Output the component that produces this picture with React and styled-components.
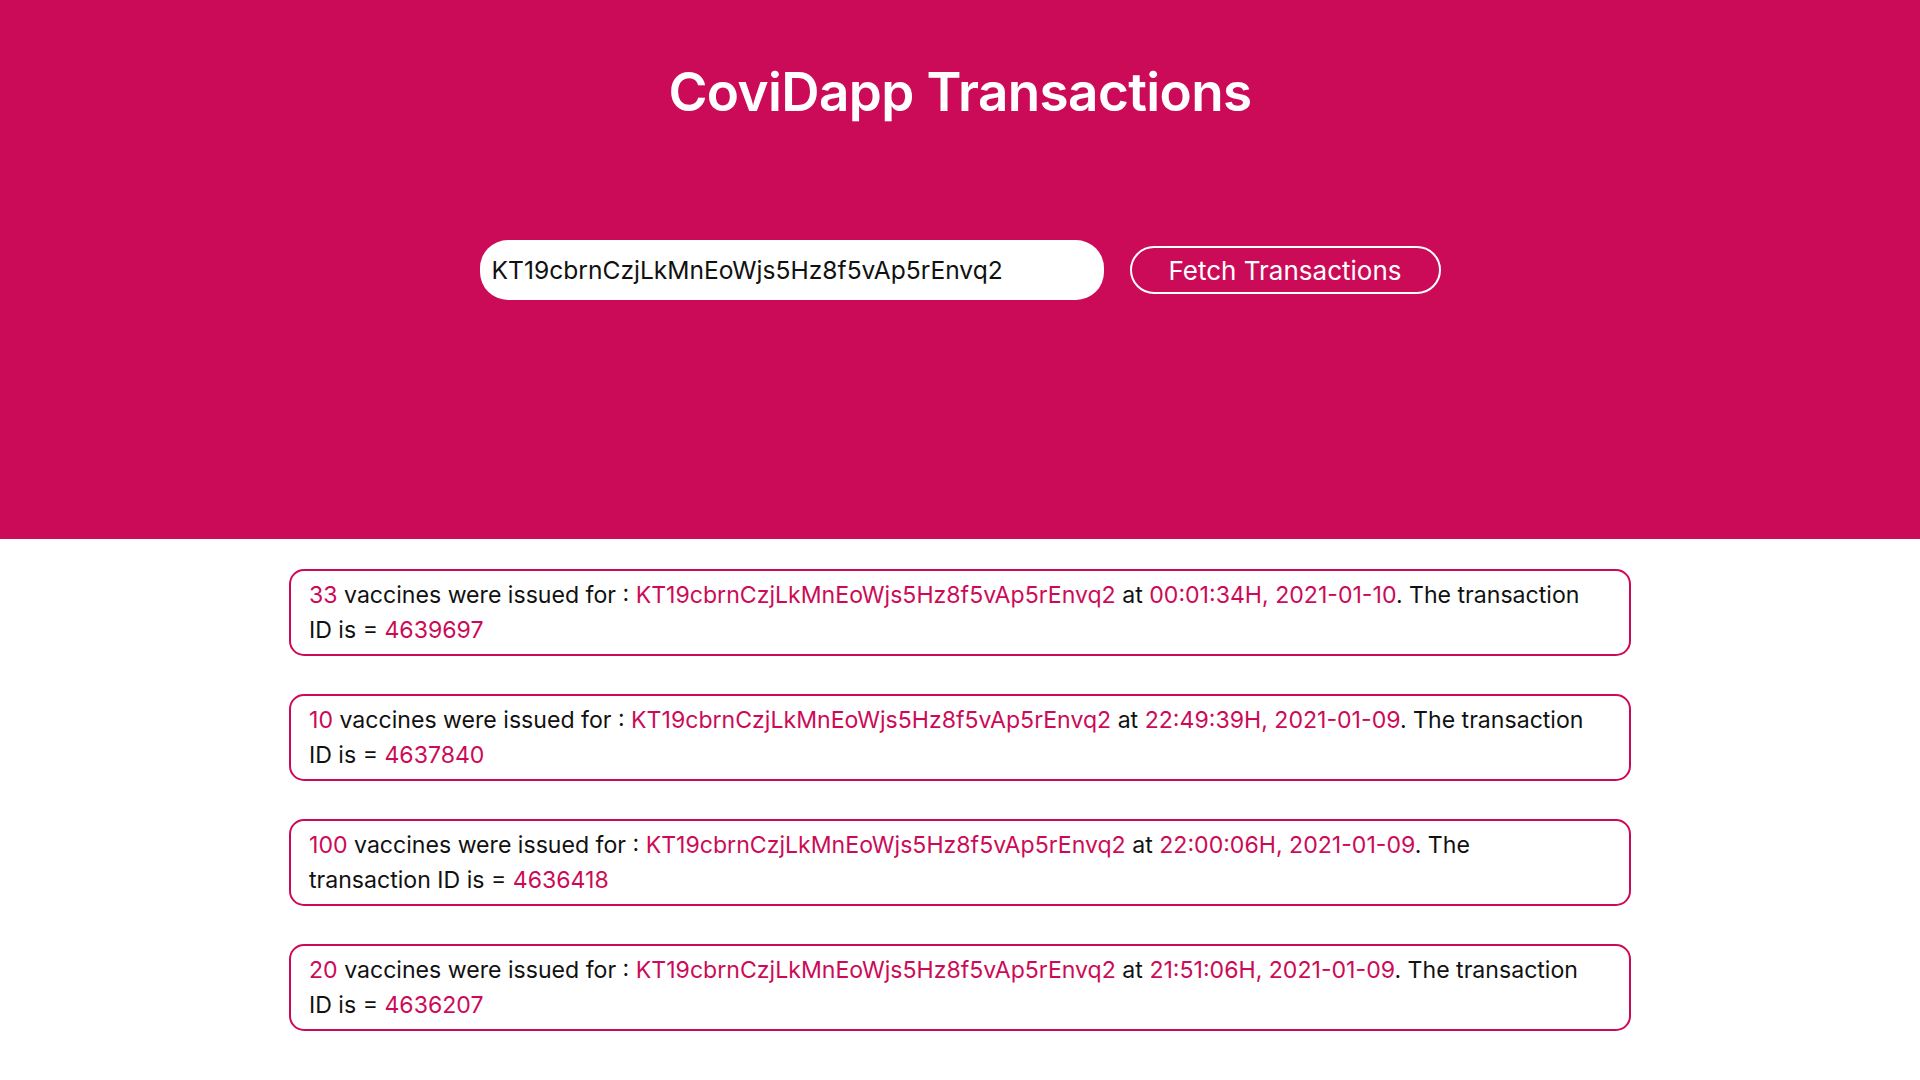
import React from "react";
import styled, { createGlobalStyle } from "styled-components";

const PINK = "#cc0b58";

const GlobalStyle = createGlobalStyle`
  html, body { margin: 0; padding: 0; background: #fff; }
  body { font-family: "Inter", "Liberation Sans", sans-serif; }
`;

const Header = styled.header`
  background: ${PINK};
  height: 539px;
  display: flex;
  flex-direction: column;
  align-items: center;
  padding-top: 64px;
  box-sizing: border-box;
`;

const Title = styled.h1`
  margin: 0;
  color: #fff;
  font-size: 53px;
  font-weight: 600;
  line-height: 56px;
  letter-spacing: -0.6px;
`;

const SearchRow = styled.div`
  margin-top: 120px;
  display: flex;
  align-items: center;
  gap: 26px;
`;

const Input = styled.input`
  width: 624px;
  height: 60px;
  box-sizing: border-box;
  border: none;
  border-radius: 28px;
  padding: 0 12px;
  font-family: inherit;
  font-size: 24.6px;
  color: #111;
  outline: none;
`;

const Button = styled.button`
  width: 311px;
  height: 48px;
  box-sizing: border-box;
  border: 2px solid #fff;
  border-radius: 24px;
  background: transparent;
  color: #fff;
  font-family: inherit;
  font-size: 26px;
  padding: 0;
  cursor: pointer;
`;

const List = styled.main`
  width: 1342px;
  margin: 30px auto;
  display: flex;
  flex-direction: column;
  gap: 38px;
`;

const Card = styled.div`
  border: 2px solid ${PINK};
  border-radius: 15px;
  padding: 7px 40px 7px 18px;
  font-size: 23.1px;
  line-height: 34.5px;
  color: #111;
`;

const Hi = styled.span`
  color: ${PINK};
`;

const ADDR = "KT19cbrnCzjLkMnEoWjs5Hz8f5vAp5rEnvq2";

const txs = [
  { n: 33, t: "00:01:34H, 2021-01-10", id: 4639697 },
  { n: 10, t: "22:49:39H, 2021-01-09", id: 4637840 },
  { n: 100, t: "22:00:06H, 2021-01-09", id: 4636418 },
  { n: 20, t: "21:51:06H, 2021-01-09", id: 4636207 },
];

export default function App() {
  return (
    <>
      <GlobalStyle />
      <Header>
        <Title>CoviDapp Transactions</Title>
        <SearchRow>
          <Input defaultValue={ADDR} />
          <Button>Fetch Transactions</Button>
        </SearchRow>
      </Header>
      <List>
        {txs.map((tx) => (
          <Card key={tx.id}>
            <Hi>{tx.n}</Hi> vaccines were issued for : <Hi>{ADDR}</Hi> at{" "}
            <Hi>{tx.t}</Hi>. The transaction ID is = <Hi>{tx.id}</Hi>
          </Card>
        ))}
      </List>
    </>
  );
}
